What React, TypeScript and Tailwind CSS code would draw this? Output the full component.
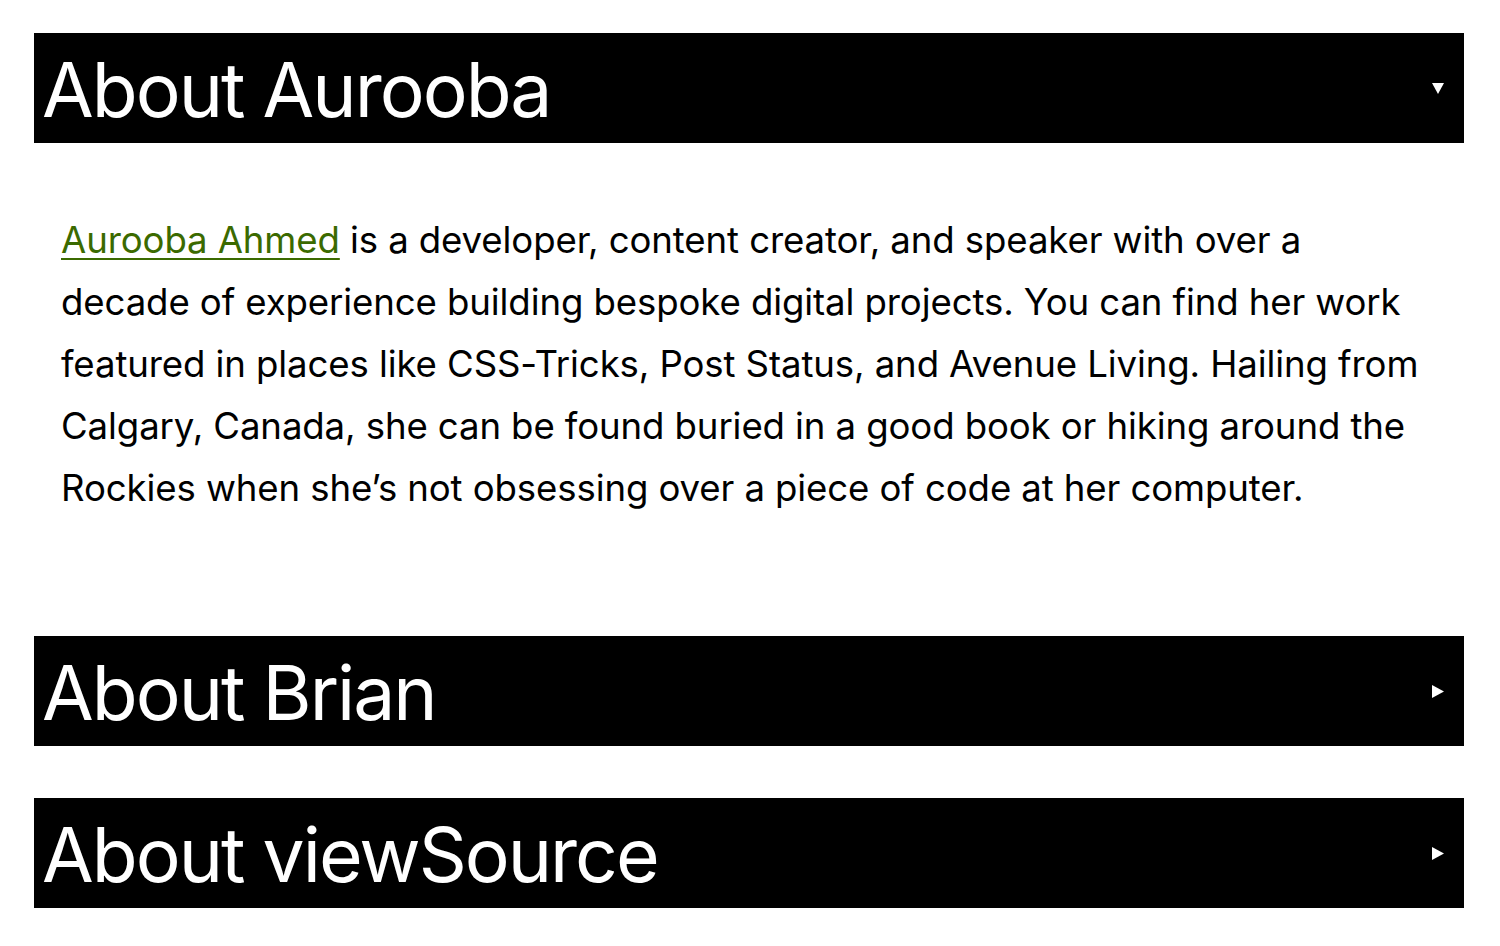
import { useState } from "react";

const SECTIONS = [
  {
    title: "About Aurooba",
    body: (
      <p>
        <a href="#aurooba" className="text-[#3b6a00] underline underline-offset-[5px] decoration-2">
          Aurooba Ahmed
        </a>{" "}
        is a developer, content creator, and speaker with over a decade of
        experience building bespoke digital projects. You can find her work
        featured in places like CSS-Tricks, Post Status, and Avenue Living.
        Hailing from Calgary, Canada, she can be found buried in a good book or
        hiking around the Rockies when she’s not obsessing over a piece of code
        at her computer.
      </p>
    ),
  },
  { title: "About Brian", body: <p>Brian is a developer and co-host of viewSource.</p> },
  { title: "About viewSource", body: <p>viewSource is a show about building the web.</p> },
];

function Arrow({ open }: { open: boolean }) {
  return open ? (
    <svg width="12" height="11" viewBox="0 0 12 11">
      <path d="M0 0h12L6 11z" fill="white" />
    </svg>
  ) : (
    <svg width="12" height="13" viewBox="0 0 12 13">
      <path d="M0 0l12 6.5L0 13z" fill="white" />
    </svg>
  );
}

export default function App() {
  const [open, setOpen] = useState<number[]>([0]);
  const toggle = (i: number) =>
    setOpen((o) => (o.includes(i) ? o.filter((x) => x !== i) : [...o, i]));

  return (
    <div className="min-h-screen bg-white pt-[33px] pl-[34px] pr-[36px] font-['Inter',sans-serif]">
      {SECTIONS.map((s, i) => {
        const isOpen = open.includes(i);
        return (
          <section key={s.title} className="mb-[52px]">
            <button
              onClick={() => toggle(i)}
              className="w-full h-[110px] bg-black text-white flex items-center justify-between pl-[8px] pr-[20px] text-left"
            >
              <h2 className="text-[75px] leading-[109px] tracking-[-2px] pt-[3px]">{s.title}</h2>
              <Arrow open={isOpen} />
            </button>
            {isOpen && (
              <div className="px-[27px] pt-[66px] pb-[65px] text-[36.6px] leading-[62px] tracking-[-0.1px] text-black">
                {s.body}
              </div>
            )}
          </section>
        );
      })}
    </div>
  );
}
